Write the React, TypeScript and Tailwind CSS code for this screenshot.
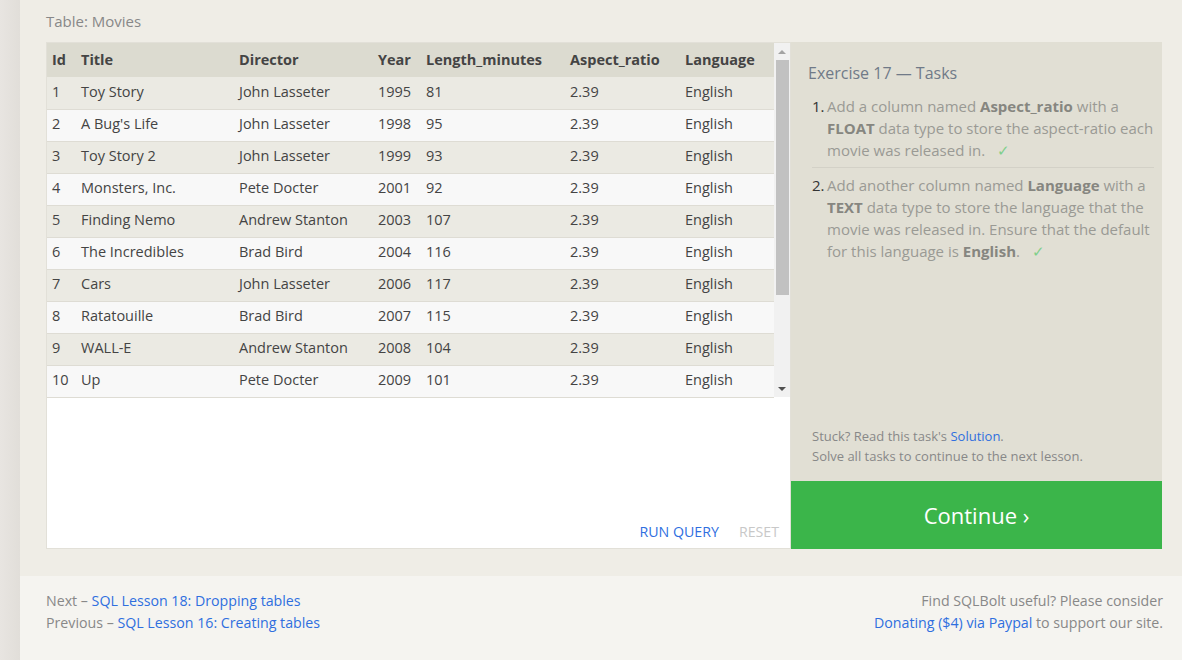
import React from 'react';

const movies = [
  [1, 'Toy Story', 'John Lasseter', 1995, 81],
  [2, "A Bug's Life", 'John Lasseter', 1998, 95],
  [3, 'Toy Story 2', 'John Lasseter', 1999, 93],
  [4, 'Monsters, Inc.', 'Pete Docter', 2001, 92],
  [5, 'Finding Nemo', 'Andrew Stanton', 2003, 107],
  [6, 'The Incredibles', 'Brad Bird', 2004, 116],
  [7, 'Cars', 'John Lasseter', 2006, 117],
  [8, 'Ratatouille', 'Brad Bird', 2007, 115],
  [9, 'WALL-E', 'Andrew Stanton', 2008, 104],
  [10, 'Up', 'Pete Docter', 2009, 101],
];

const cols = ['Id', 'Title', 'Director', 'Year', 'Length_minutes', 'Aspect_ratio', 'Language'];
const widths = ['w-[28px]', 'w-[158px]', 'w-[139px]', 'w-[48px]', 'w-[144px]', 'w-[115px]', 'w-[95px]'];

const MoviesTable: React.FC = () => {
  return (
    <div className="flex h-[354px]">
      <table className="table-fixed border-collapse w-[727px] text-[14.5px] text-[#444]">
        <thead>
          <tr className="h-[34px] bg-[#dcdbd0]">
            {cols.map((c, i) => (
              <th key={c} className={`${widths[i]} px-[6px] first:pl-[5px] text-left font-bold`}>
                {c}
              </th>
            ))}
          </tr>
        </thead>
        <tbody>
          {movies.map((m, i) => (
            <tr
              key={m[0]}
              className={`h-[32px] border-b border-[#dedcd4] ${i % 2 === 0 ? 'bg-[#ebeae3]' : 'bg-[#f8f8f8]'}`}
            >
              {m.map((v, j) => (
                <td key={j} className="px-[6px] first:pl-[5px] pb-[2px] whitespace-nowrap">
                  {v}
                </td>
              ))}
              <td className="px-[6px] pb-[2px]">2.39</td>
              <td className="px-[6px] pb-[2px]">English</td>
            </tr>
          ))}
        </tbody>
      </table>
      {/* fake scrollbar */}
      <div className="w-[17px] bg-[#f1f1f1] flex flex-col items-center">
        <div className="h-[17px] flex items-center justify-center">
          <div className="w-0 h-0 border-l-[4px] border-r-[4px] border-b-[4px] border-l-transparent border-r-transparent border-b-[#a3a3a3]" />
        </div>
        <div className="w-[13px] h-[235px] bg-[#c1c1c1]" />
        <div className="flex-1" />
        <div className="h-[17px] flex items-center justify-center">
          <div className="w-0 h-0 border-l-[4px] border-r-[4px] border-t-[4px] border-l-transparent border-r-transparent border-t-[#505050]" />
        </div>
      </div>
    </div>
  );
};

const Check = () => <span className="ml-3 text-[#7fcf8b]">✓</span>;

const App: React.FC = () => {
  return (
    <div className="flex min-h-[660px] bg-[#e6e3de] font-['Open_Sans',sans-serif]">
      <div className="w-[20px] bg-gradient-to-r from-[#e8e5e1] to-[#e1ded9]" />
      <div className="flex-1 flex flex-col">
        <div className="bg-[#efede6] pl-[26px] pr-[20px] pt-[10px] pb-[27px]">
          <div className="text-[15px] text-[#888] h-[22px] leading-[22px]">Table: Movies</div>
          <div className="flex mt-[10px] h-[507px]">
            <div className="w-[745px] bg-white border border-[#e2e0d8] flex flex-col">
              <MoviesTable />
              <div className="flex-1 flex items-end justify-end gap-[20px] pr-[11px] pb-[6px] text-[14.2px]">
                <span className="text-[#2f6fdf]">RUN QUERY</span>
                <span className="text-[#c8c8c8]">RESET</span>
              </div>
            </div>
            <div className="flex-1 flex flex-col bg-[#e1dfd4]">
              <div className="flex-1 flex flex-col pl-[17px] pr-[8px] pt-[19px]">
                <div className="text-[16px] text-[#707a88]">Exercise 17 — Tasks</div>
                <ol className="mt-[10px] ml-[4px] text-[15px] leading-[22px] text-[#9a9a94]">
                  <li className="flex pb-[6px] border-b border-[#d3d1c7]">
                    <span className="text-[#333] w-[15px] shrink-0">1.</span>
                    <span>
                      Add a column named <b className="text-[#868680]">Aspect_ratio</b> with a{' '}
                      <b className="text-[#868680]">FLOAT</b> data type to store the aspect-ratio each movie was
                      released in.
                      <Check />
                    </span>
                  </li>
                  <li className="flex pt-[6px]">
                    <span className="text-[#333] w-[15px] shrink-0">2.</span>
                    <span>
                      Add another column named <b className="text-[#868680]">Language</b> with a{' '}
                      <b className="text-[#868680]">TEXT</b> data type to store the language that the movie was
                      released in. Ensure that the default for this language is{' '}
                      <b className="text-[#868680]">English</b>.
                      <Check />
                    </span>
                  </li>
                </ol>
                <div className="flex-1" />
                <div className="ml-[4px] pb-[15px] text-[13px] leading-[20px] text-[#888]">
                  <div>
                    Stuck? Read this task's <span className="text-[#2f6fdf]">Solution</span>.
                  </div>
                  <div>Solve all tasks to continue to the next lesson.</div>
                </div>
              </div>
              <div className="h-[68px] bg-[#3bb54a] flex items-center justify-center text-white text-[22px]">
                Continue ›
              </div>
            </div>
          </div>
        </div>
        <div className="flex-1 bg-[#f5f4f0] pl-[26px] pr-[19px] pt-[14px] flex justify-between text-[14.2px] leading-[22px] text-[#888]">
          <div>
            <div>
              Next – <span className="text-[#2f6fdf]">SQL Lesson 18: Dropping tables</span>
            </div>
            <div>
              Previous – <span className="text-[#2f6fdf]">SQL Lesson 16: Creating tables</span>
            </div>
          </div>
          <div className="text-right">
            <div>Find SQLBolt useful? Please consider</div>
            <div>
              <span className="text-[#2f6fdf]">Donating ($4) via Paypal</span> to support our site.
            </div>
          </div>
        </div>
      </div>
    </div>
  );
};

export default App;
